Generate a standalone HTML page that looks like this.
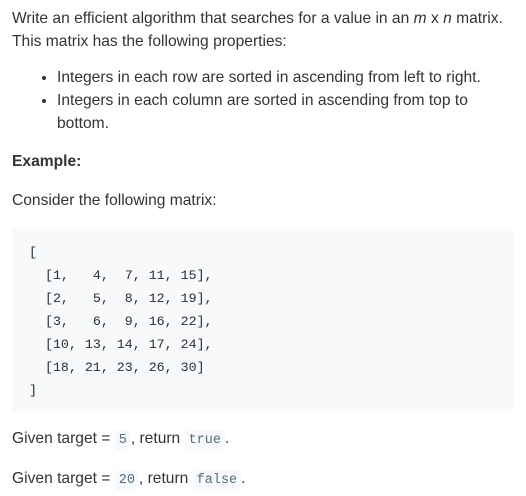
<!DOCTYPE html>
<html><head><style>
body{margin:0;background:#fff;font-family:"Liberation Sans",sans-serif;font-size:15.6px;color:#333;}
.w{position:relative;width:526px;height:496px;}
.t{position:absolute;left:12px;white-space:nowrap;line-height:23px;}
ul{position:absolute;left:0;top:66px;margin:0;padding-left:57px;line-height:23px;width:448px;}
li{margin:0}
pre{position:absolute;left:12px;top:228px;width:502px;height:183px;margin:0;background:#f7f9fa;border-radius:3px;font-family:"Liberation Mono",monospace;font-size:13.3px;line-height:23px;color:#263238;padding:13px 0 0 17px;box-sizing:border-box;}
code{font-family:"Liberation Mono",monospace;font-size:13.5px;background:#f7f9fa;color:#546e7a;padding:3px 4px;border-radius:3px;}
</style></head><body><div class="w">
<div class="t" style="top:7px">Write an efficient algorithm that searches for a value in an <i>m</i> x <i>n</i> matrix.</div>
<div class="t" style="top:30px">This matrix has the following properties:</div>
<ul><li>Integers in each row are sorted in ascending from left to right.</li><li>Integers in each column are sorted in ascending from top to bottom.</li></ul>
<div class="t" style="top:150px;font-weight:bold">Example:</div>
<div class="t" style="top:189px">Consider the following matrix:</div>
<pre>[
  [1,   4,  7, 11, 15],
  [2,   5,  8, 12, 19],
  [3,   6,  9, 16, 22],
  [10, 13, 14, 17, 24],
  [18, 21, 23, 26, 30]
]</pre>
<div class="t" style="top:427px">Given target = <code>5</code>, return <code>true</code>.</div>
<div class="t" style="top:467px">Given target = <code>20</code>, return <code>false</code>.</div>
</div></body></html>
